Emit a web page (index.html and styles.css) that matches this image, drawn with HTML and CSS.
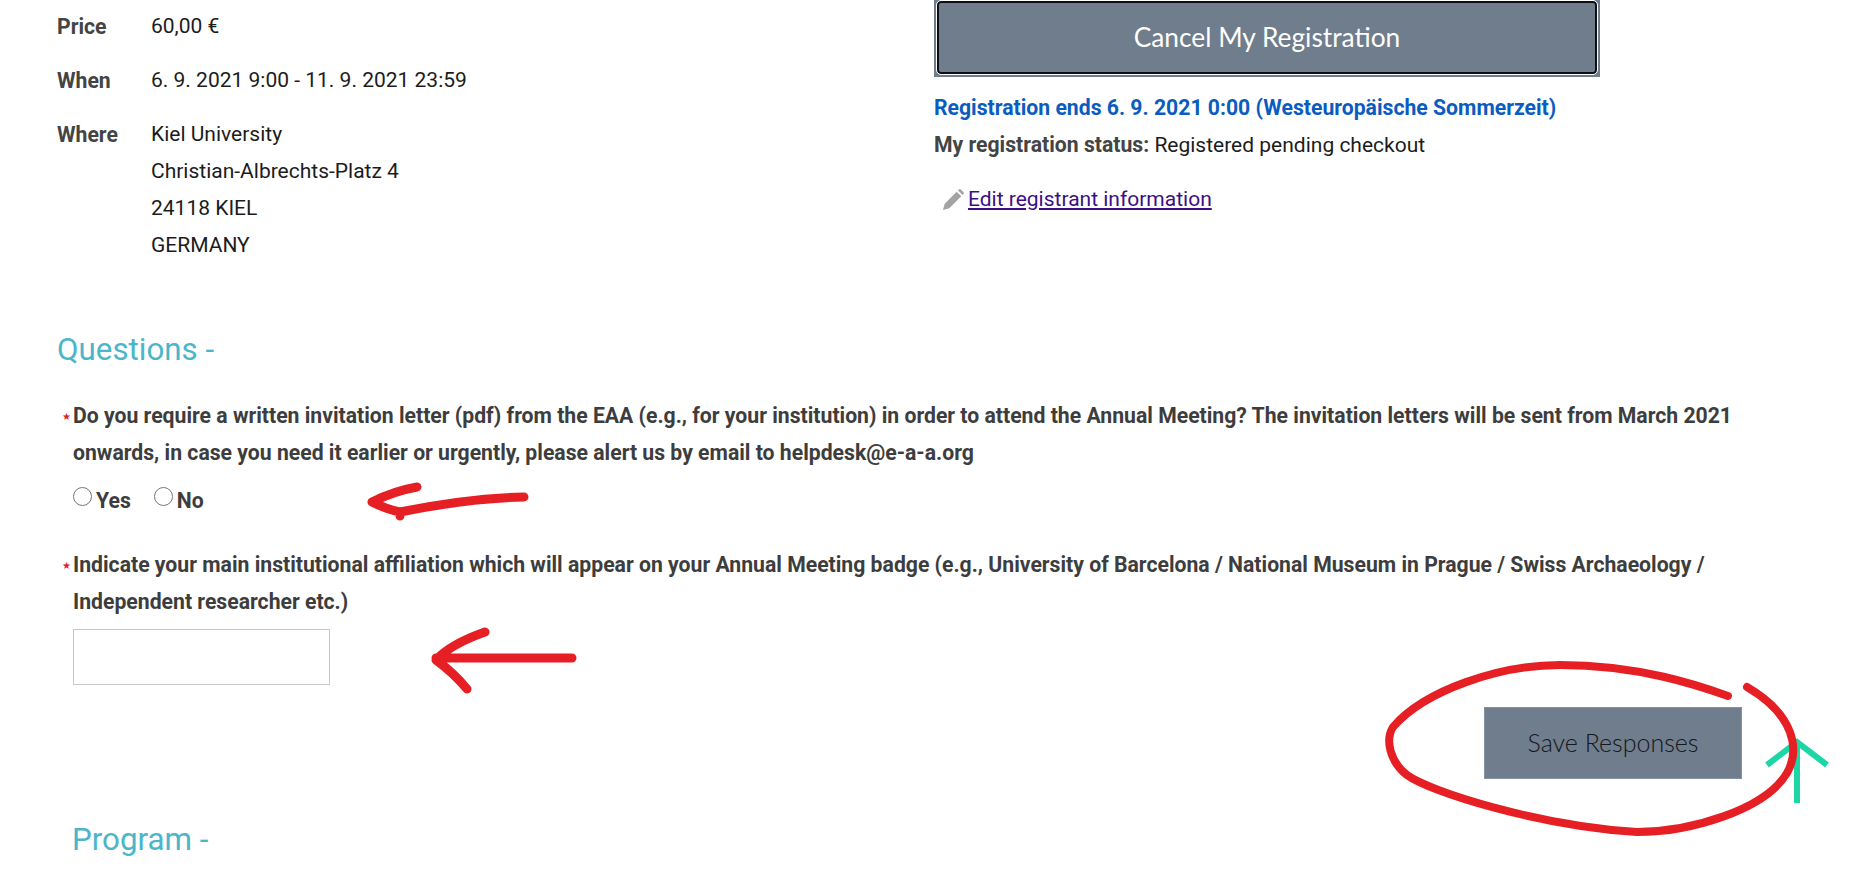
FILE: index.html
```html
<!DOCTYPE html>
<html lang="en">
<head>
<meta charset="utf-8">
<title>Registration</title>
<link rel="stylesheet" href="styles.css">
</head>
<body>
<main class="page">
  <section class="top">
    <div class="details">
      <div class="row"><div class="label">Price</div><div class="value"><div>60,00 €</div></div></div>
      <div class="row"><div class="label">When</div><div class="value"><div>6. 9. 2021 9:00 - 11. 9. 2021 23:59</div></div></div>
      <div class="row"><div class="label">Where</div><div class="value"><div>Kiel University</div><div>Christian-Albrechts-Platz 4</div><div>24118 KIEL</div><div>GERMANY</div></div></div>
    </div>
    <div class="side">
      <button class="cancel" type="button">Cancel My Registration</button>
      <p class="ends">Registration ends 6. 9. 2021 0:00 (Westeuropäische Sommerzeit)</p>
      <p class="status"><b>My registration status:</b> Registered pending checkout</p>
      <p class="edit">
        <svg class="pencil" viewBox="0 0 24 24" aria-hidden="true"><path d="M1 23l2-7L16 3l5 5L8 21z"/><path d="M17.500 1.500l1-1a1.500 1.500 0 0 1 2 0l3 3a1.500 1.500 0 0 1 0 2l-1 1z"/></svg>
        <a href="#">Edit registrant information</a>
      </p>
    </div>
  </section>

  <h2 class="questions">Questions -</h2>

  <form class="form">
    <div class="question">
      <span class="req">★</span>
      <p class="qtext">Do you require a written invitation letter (pdf) from the EAA (e.g., for your institution) in order to attend the Annual Meeting? The invitation letters will be sent from March 2021 onwards, in case you need it earlier or urgently, please alert us by email to helpdesk@e-a-a.org</p>
    </div>
    <div class="choices">
      <label class="choice"><input type="radio" name="letter">Yes</label>
      <label class="choice"><input type="radio" name="letter">No</label>
    </div>
    <div class="question second">
      <span class="req">★</span>
      <p class="qtext">Indicate your main institutional affiliation which will appear on your Annual Meeting badge (e.g., University of Barcelona / National Museum in Prague / Swiss Archaeology / Independent researcher etc.)</p>
    </div>
    <input class="answer" type="text" aria-label="Affiliation">
    <div class="actions"><button class="save" type="button">Save Responses</button></div>
  </form>

  <h2 class="program">Program -</h2>
</main>

<svg class="ink" viewBox="0 0 1849 870" aria-hidden="true">
  <path class="teal" d="M1797 803V744M1767 765L1797 742L1827 765"/>
  <path class="red a1" d="M524 497C480 498 440 504 400 512C390 510 380 506 372 502C384 496 400 490 417 487M400 512L400 516"/>
  <path class="red a2" d="M572 658H436M485 632C465 639 447 648 436 660C447 668 458 678 467 689"/>
  <path class="red a3" d="M1728 696C1700 686 1640 665 1560 665C1500 665 1425 690 1393 727C1385 740 1390 762 1407 775C1430 792 1540 826 1637 832C1690 832 1765 810 1787 773C1800 750 1795 715 1747 687"/>
</svg>
</body>
</html>
```
FILE: styles.css
```css
* { box-sizing: border-box; }
html, body { height: 100%; }
body {
  margin: 0;
  overflow: hidden;
  background: #fff;
  color: #1c1c1c;
  font-family: Roboto, "Liberation Sans", sans-serif;
  font-size: 21px;
  line-height: 37px;
}
b, .label, .ends, .qtext, .choices { font-size: 21.2px; }
.page { padding: 0 0 0 57px; }
.top { display: flex; }
.details { width: 877px; padding-top: 8px; }
.row { display: flex; margin-bottom: 17px; }
.label { width: 94px; font-weight: 700; color: #444; }
.side { width: 666px; }
.cancel {
  position: relative;
  display: block;
  width: 666px;
  height: 79px;
  margin-top: -2px;
  padding: 0 0 2px;
  border: 0;
  background: #6f7d8c;
  color: #fff;
  font-family: Lato, sans-serif;
  font-size: 26.3px;
  font-weight: 400;
}
.cancel::before {
  content: "";
  position: absolute;
  inset: 3px;
  border: 2px solid #0c0f14;
  border-radius: 4px;
  outline: 1px solid #fff;
}
.side p { margin: 0; }
.side .ends { margin-top: 12px; color: #0b5cbf; font-weight: 700; }
.side .status { color: #1c1c1c; }
.status b { color: #444; }
.side .edit { margin-top: 17px; display: flex; align-items: center; gap: 4px; padding-left: 8px; }
.pencil { width: 22px; height: 22px; fill: #a3a3a3; }
.edit a { color: #3c0f85; text-decoration: underline; }
h2 { margin: 0; font-size: 31.300px; font-weight: 400; color: #4bb6c9; line-height: 40px; }
.questions { margin-top: 49px; }
.form { padding: 0 0 0 16px; }
.question { position: relative; margin-top: 27px; }
.question.second { margin-top: 27px; }
.req { position: absolute; left: -11px; top: 1px; color: #e0202a; font-size: 10px; line-height: 37px; }
.qtext { margin: 0; width: 1700px; font-weight: 700; color: #3d3d3d; }
.choices { display: flex; gap: 23px; margin-top: 11px; font-weight: 700; color: #3d3d3d; }
.choice { display: flex; align-items: center; }
.choice input { width: 19px; height: 19px; margin: 0 4px 8px 0; }
.answer { display: block; width: 257px; height: 56px; margin-top: 9px; border: 1px solid #c8c8c8; background: #fff; }
.actions { display: flex; justify-content: flex-end; padding-right: 107px; margin-top: 22px; }
.save {
  width: 258px;
  height: 72px;
  padding: 0 0 2px;
  border: 1px solid #8392a0;
  background: #6f7d8c;
  color: #14171c;
  font-family: Lato, sans-serif;
  font-size: 25px;
  font-weight: 300;
}
.program { margin: 41px 0 0 15px; }
.ink { position: absolute; inset: 0; width: 1849px; height: 870px; fill: none; pointer-events: none; }
.teal { stroke: #1cd6a6; stroke-width: 6; }
.red { stroke: #e61f24; stroke-linecap: round; stroke-linejoin: round; }
.a1, .a2 { stroke-width: 9; }
.a3 { stroke-width: 8; }
```
